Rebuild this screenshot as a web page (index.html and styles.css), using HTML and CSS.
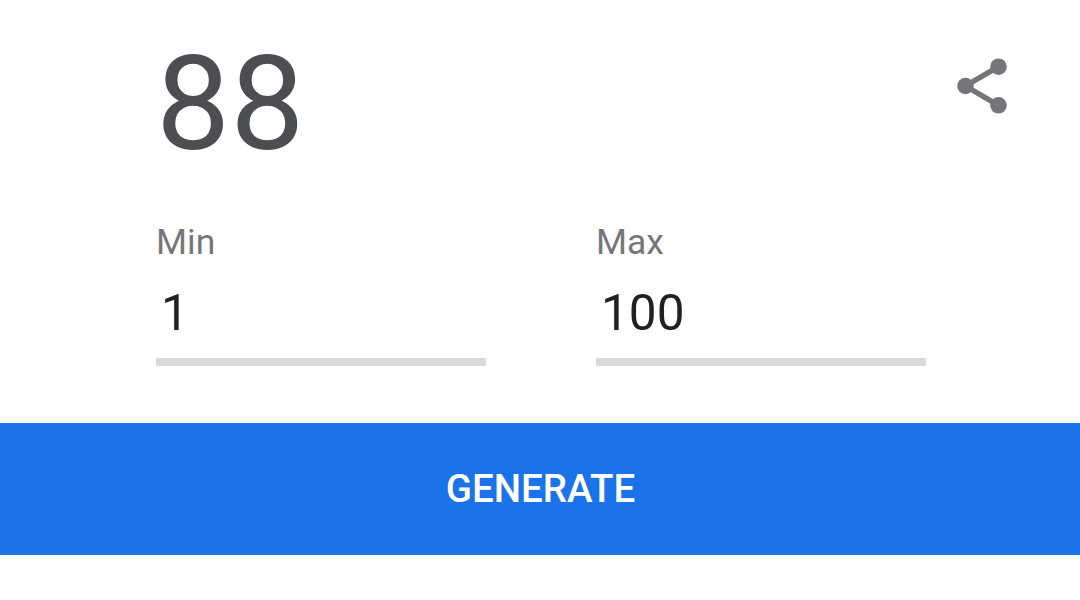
FILE: index.html
```html
<!DOCTYPE html>
<html lang="en">
<head>
    <meta charset="UTF-8">
    <meta name="viewport" content="width=device-width, initial-scale=1.0">
    <title>Random Number Generator</title>
    <link rel="stylesheet" href="styles.css">
</head>
<body>
    <div class="main">
        <div class="top">
            <div class="result" id="result">88</div>
            <svg class="share" viewBox="0 0 50 56">
                <path d="M41.5 8.7 L8.5 28 L41.5 47.3" fill="none" stroke="#757679" stroke-width="5.4"/>
                <circle cx="41.5" cy="8.7" r="8.3" fill="#757679"/>
                <circle cx="8.5" cy="28" r="8.3" fill="#757679"/>
                <circle cx="41.5" cy="47.3" r="8.3" fill="#757679"/>
            </svg>
        </div>
        <form id="form" onsubmit="generate(event)">
            <div class="fields">
                <div class="each">
                    <label for="min">Min</label>
                    <input type="text" id="min" value="1">
                </div>
                <div class="each">
                    <label for="max">Max</label>
                    <input type="text" id="max" value="100">
                </div>
            </div>
            <button type="submit">GENERATE</button>
        </form>
    </div>
    <script>
        function generate(event) {
            event.preventDefault();
            let min = Number(document.getElementById("min").value);
            let max = Number(document.getElementById("max").value);
            let number = Math.floor(Math.random() * (max - min + 1)) + min;
            document.getElementById("result").textContent = number;
        }
    </script>
</body>
</html>
```

FILE: styles.css
```css
body{
    margin: 0px;
    background-color: #fff;
    font-family: Roboto, sans-serif;
}
.top{
    display: flex;
    justify-content: space-between;
    height: 221px;
    padding: 27px 73px 0px 156px;
    box-sizing: border-box;
}
.result{
    font-size: 132px;
    line-height: 154px;
    color: #4d4e52;
}
.share{
    width: 50px;
    height: 56px;
    margin-top: 31px;
}
.fields{
    display: flex;
    gap: 110px;
    height: 202px;
    padding-left: 156px;
}
.each{
    display: flex;
    flex-direction: column;
    width: 330px;
}
label{
    font-size: 35.5px;
    line-height: 42px;
    color: #757679;
}
input{
    height: 103px;
    box-sizing: border-box;
    padding: 4px 5px 0px;
    border: none;
    border-bottom: 8px solid #dadada;
    outline: none;
    font-family: inherit;
    font-size: 49.5px;
    color: #212121;
}
button{
    display: block;
    width: 100%;
    height: 132px;
    padding: 0px 0px 2px 1px;
    border: none;
    background-color: #1a73e8;
    color: #fff;
    font-family: inherit;
    font-size: 38.5px;
    font-weight: 500;
}
```
